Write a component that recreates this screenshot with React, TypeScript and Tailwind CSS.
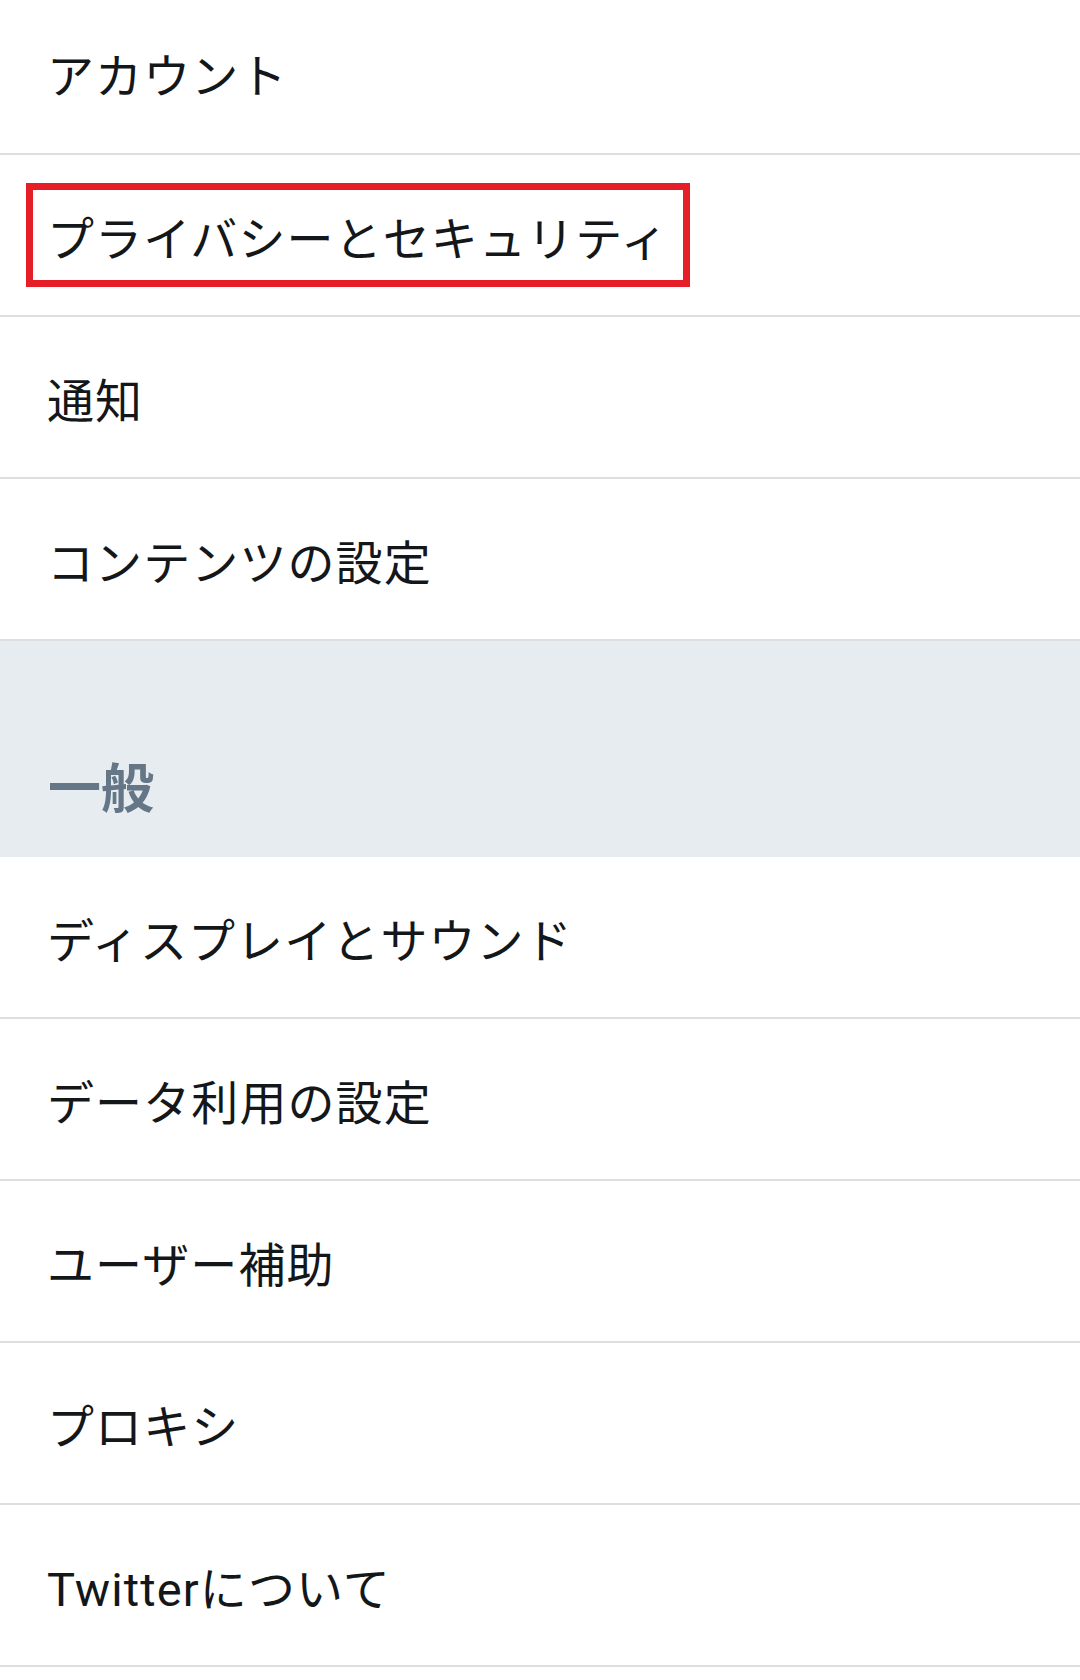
const topItems = ["アカウント", "プライバシーとセキュリティ", "通知", "コンテンツの設定"];
const generalItems = ["ディスプレイとサウンド", "データ利用の設定", "ユーザー補助", "プロキシ", "Twitterについて"];

function Row({ label, highlighted, first }: { label: string; highlighted?: boolean; first?: boolean }) {
  return (
    <div
      className={`relative flex items-center px-[47px] border-b-2 border-[#dedede] ${first ? "h-[155px]" : "h-[162px] pt-[8px]"}`}
    >
      {highlighted && (
        <div className="absolute left-[26px] top-[28px] w-[664px] h-[104px] border-[7px] border-[#e61e28]" />
      )}
      <span className="text-[47px] leading-none text-[#14171a] tracking-[1.1px]">{label}</span>
    </div>
  );
}

export default function App() {
  return (
    <div
      className="w-[1080px] h-[1680px] bg-white overflow-hidden flex flex-col"
      style={{ fontFamily: 'Roboto, "Noto Sans CJK JP", sans-serif' }}
    >
      {topItems.map((label, i) => (
        <Row key={label} label={label} first={i === 0} highlighted={i === 1} />
      ))}

      <div className="h-[216px] bg-[#e6ecf0] flex items-end px-[48px] pb-[40px]">
        <span className="text-[53px] leading-none font-bold text-[#657786]">一般</span>
      </div>

      {generalItems.map((label) => (
        <Row key={label} label={label} />
      ))}
    </div>
  );
}
